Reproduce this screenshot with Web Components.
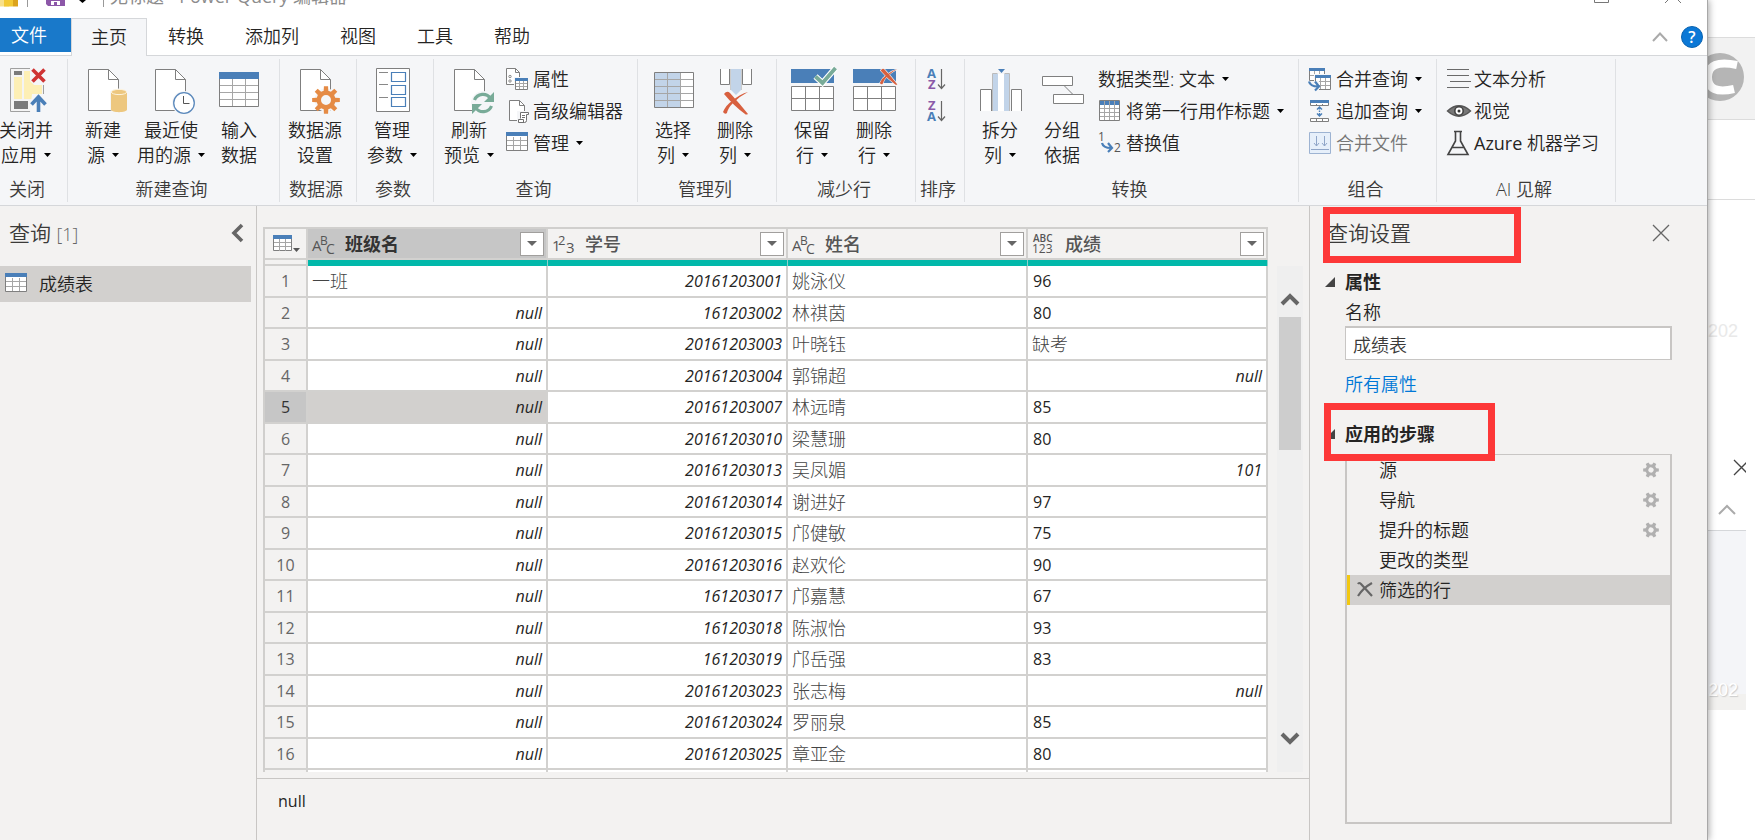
<!DOCTYPE html>
<html lang="zh-CN">
<head>
<meta charset="utf-8">
<title>Power Query 编辑器</title>
<style>
html,body{margin:0;height:100%;overflow:hidden;background:#fff}
body{font:350 18px/24px "Open Sans","Noto Sans CJK SC",sans-serif;color:#252423}
</style>
</head>
<body>
<pq-desktop>
  <pq-window>
    <pq-title-bar></pq-title-bar>
    <pq-tabs></pq-tabs>
    <pq-ribbon></pq-ribbon>
    <pq-workspace>
      <pq-queries></pq-queries>
      <pq-preview></pq-preview>
      <pq-settings></pq-settings>
    </pq-workspace>
  </pq-window>
  <pq-backdrop></pq-backdrop>
</pq-desktop>
<script>
const BASE = `*,:host{box-sizing:border-box}
button{font:inherit;color:inherit;background:none;border:0;padding:0;margin:0;text-align:inherit;cursor:default}
svg{display:block;overflow:visible;flex:none}h2,h3,ul{margin:0;padding:0}`;

function define(name, render) {
  customElements.define(name, class extends HTMLElement {
    connectedCallback() {
      if (this.shadowRoot) return;
      const root = this.attachShadow({ mode: 'open' });
      const t = document.createElement('template');
      t.innerHTML = `<style>${BASE}</style>` + render(this);
      root.append(t.content.cloneNode(true));
    }
  });
}

/* ---------- icons ---------- */
const G = '#7f7f7f', B = '#4a7fb8';
const page = x => `<path d="M${x} 1.5h20l10 10v31h-30z" fill="#fff" stroke="${G}"/><path d="M${x + 20} 1.5v10h10" fill="none" stroke="${G}"/>`;
function gearPath(cx, cy, ro, ri, n, hole) {
  let d = '';
  for (let i = 0; i < n; i++) {
    const a = i * 2 * Math.PI / n - Math.PI / 2, s = Math.PI / n;
    [[ri, -s * .62], [ro, -s * .38], [ro, s * .38], [ri, s * .62]].forEach(([r, o], k) => {
      d += (i || k ? 'L' : 'M') + (cx + r * Math.cos(a + o)).toFixed(2) + ' ' + (cy + r * Math.sin(a + o)).toFixed(2);
    });
  }
  return d + `Z M${cx - hole} ${cy}a${hole} ${hole} 0 1 0 ${2 * hole} 0a${hole} ${hole} 0 1 0 ${-2 * hole} 0Z`;
}
const brushX = (x, y, s) => `<g transform="translate(${x} ${y}) scale(${s})"><path d="M-12-8Q-9-12-6-9Q4 2 12 12Q10 13 9 12Q-2 4-12-8ZM12-10Q4-6-3 1Q-8 6-9 11Q-11 13-13 10Q-10 3-4-1Q4-8 12-10Z" fill="#d8603f" stroke="#f5f6f8" stroke-width="1.6" paint-order="stroke"/></g>`;
const rows2 = `<path d="M1.5 18.5h42v24h-42zM15.5 18.5v24M29.5 18.5v24M1.5 30.5h42" fill="#fff" stroke="${G}"/><path d="M1 1h43v14H1z" fill="${B}"/>`;
const smallTable = `<path d="M.5 3.5h21v15h-21z" fill="#fff" stroke="${G}"/><path d="M7.5 5v13M14.5 5v13M1 8.5h20M1 13.5h20" stroke="#a6a6a6"/><path d="M0 0h22v4H0z" fill="${B}"/>`;
const arrow12 = (x, y) => `<path d="M${x} ${y}c1 4 4 5 9 5M${x + 6} ${y + 0}l4 5l-4 4" fill="none" stroke="${B}" stroke-width="2.2"/>`;
const letter = (x, y, t, c, s = 13, w = 700) => `<text x="${x}" y="${y}" font-family="Open Sans" font-size="${s}" font-weight="${w}" fill="${c}">${t}</text>`;
const sortArrow = '<path d="M15.5 1v19M12 16.5l3.5 4l3.5-4" fill="none" stroke="#666" stroke-width="1.2"/>';

const ICONS = {
  close: [44, `<path d="M6.5.5h33v43h-33z" fill="#f4f4f4" stroke="#a0a0a0"/><path d="M10 3h8v4h-8zM10 33h14v8H10z" fill="#7a7a7a"/><path d="M10 9h8v22h-8zM20 3h18v28H20z" fill="#fdefb5"/><path d="M26-1h18v18H30l-4-4zM28 26h16v18H26z" fill="#f5f6f8"/><path d="M28.500 1.500l12 12M40.500 1.500l-12 12" stroke="#cf3434" stroke-width="3.600"/><path d="M34.500 44V29M27.500 36.500l7-7.500l7 7.500" fill="none" stroke="${B}" stroke-width="3.600"/>`],
  newSource: [44, page(7.5) + `<path d="M29 23q9-5 18 0v19q-9 5-18 0z" fill="#f5f6f8"/><path d="M30 24v17.500c0 3.500 16 3.500 16 0V24z" fill="#edc77f"/><ellipse cx="38" cy="24" rx="7.700" ry="2.600" fill="#edc77f" stroke="#fdf3dd"/>`],
  recent: [44, page(6.5) + `<circle cx="35" cy="35" r="12" fill="#f5f6f8"/><circle cx="35" cy="35" r="10.300" fill="#fff" stroke="#5a88bb" stroke-width="1.300"/><path d="M34.500 28v7.500h6" fill="none" stroke="#555"/>`],
  enter: [44, `<path d="M2.500 8.500h39v30h-39z" fill="#fff" stroke="${G}"/><path d="M15.500 10v28M28.500 10v28M3 17.500h38M3 24.500h38M3 31.500h38" stroke="#a6a6a6"/><path d="M2 4h40v7H2z" fill="${B}"/>`],
  dsSettings: [44, page(7.5) + `<circle cx="33" cy="32" r="11.500" fill="#f5f6f8"/><path fill-rule="evenodd" d="${gearPath(33, 32, 14, 9.5, 8, 5)}" fill="#e58b45"/>`],
  params: [44, `<path d="M6.500.5h33v43h-33z" fill="#fff" stroke="${G}"/><path d="M9 4.500h9M9 16.500h9M9 29.500h9" stroke="#888"/><path d="M21.500 4.500h14v9h-14zM21.500 17.500h14v9h-14zM21.500 29.500h14v9h-14z" fill="#fff" stroke="${B}" stroke-width="1.200"/>`],
  refresh: [44, page(7.5) + `<circle cx="36" cy="35" r="12" fill="#f5f6f8"/><path d="M27.500 32a9 9 0 0 1 16-1.500M44.500 38a9 9 0 0 1-16 1.500" fill="none" stroke="#78ab98" stroke-width="3.200"/><path d="M47 24v10h-10zM25 46V36h10z" fill="#78ab98"/>`],
  selCol: [44, `<path d="M3.500 4.500h39v35h-39z" fill="#fff"/><path d="M4 5h26v34H4z" fill="#c2d4e9"/><path d="M16.500 5v34M29.500 5v34M4 11.500h38M4 18.500h38M4 25.500h38M4 32.500h38" stroke="#a6a6a6"/><path d="M3.500 4.500h39v35h-39z" fill="none" stroke="${G}"/>`],
  delCol: [44, `<path d="M7.500 1v15.500h9V1M29.500 1v15.500h9V1" fill="#fff" stroke="${G}"/><path d="M18 1h10v21l-5 5l-5-5z" fill="#c2d4e9"/><path d="M17.500 1v21M28.500 1v21" stroke="#ccc"/>` + brushX(23, 34, 1)],
  keepRow: [44, rows2 + `<path d="M25.500 8.500l7 6.500l13-15" fill="none" stroke="#fff" stroke-width="6"/><path d="M25.500 8.500l7 6.500l13-15" fill="none" stroke="#78ab98" stroke-width="3.800"/>`],
  delRow: [44, rows2 + brushX(37, 8, .7)],
  split: [44, `<path d="M2.500 43V21.500h11V43M33.500 43V21.500h10V43" fill="#fff" stroke="${G}"/><path d="M14 6h18v37H14z" fill="#fff"/><path d="M15 6h5v37h-5zM26 6h5v37h-5z" fill="#c2d4e9"/><path d="M14.500 43V5.500h5M31.500 43V5.500h-5" fill="none" stroke="#bbb"/><path d="M20 1h7l-3.500 4z" fill="${B}"/>`],
  group: [44, `<path d="M2.500 8.500h30v9h-30zM13.500 26.500h30v9h-30z" fill="#fff" stroke="${G}"/><path d="M24.500 18l8 8" stroke="${G}"/>`],
  props: [22, `<path d="M.5.5h9l4 4v12h-13z" fill="#fff" stroke="${G}"/><path d="M9.500.5v4h4" fill="none" stroke="${G}"/><circle cx="4" cy="8.500" r="1.200" fill="none" stroke="#888"/><circle cx="4" cy="13" r="1.200" fill="none" stroke="#888"/><path d="M8 9h15v13H8z" fill="#f5f6f8"/><path d="M9.500 11.500h12v10h-12z" fill="#fff" stroke="${G}"/><path d="M13.500 13v8M17.500 13v8M10 15.500h11M10 18.500h11" stroke="#a6a6a6"/><path d="M9 10h13v3H9z" fill="${B}"/>`],
  adv: [22, `<path d="M3.500.5h10l5 5v15h-15z" fill="#fff" stroke="${G}"/><path d="M13.500.5v5h5" fill="none" stroke="${G}"/><path d="M11 11h12v12H11z" fill="#f5f6f8"/><path d="M14.500 18.500v-6h8v2h-2v6q0 2-2 2h-6v-3h5v3M16 15.500h3M16 17.500h3" fill="#fff" stroke="#707070"/>`],
  manage: [22, smallTable],
  sortAsc: [22, letter(1, 10, 'A', '#4a7fb8') + letter(2, 21, 'Z', '#8a5aa8') + sortArrow],
  sortDesc: [22, letter(2, 10, 'Z', '#8a5aa8') + letter(1, 21, 'A', '#4a7fb8') + sortArrow],
  header: [22, `<path d="M.5.5h20v20H.5z" fill="#fff"/><path d="M1 1h19v4H1z" fill="${B}"/><path d="M5.500 1v19M10.500 1v19M15.500 1v19M1 8.500h19M1 12.500h19M1 16.500h19" stroke="#a6a6a6"/><path d="M.5.5h20v20H.5z" fill="none" stroke="${G}"/>`],
  replace: [22, letter(-1, 9, '1', '#555', 12, 400) + letter(15, 20, '2', '#555', 12, 400) + arrow12(3, 11)],
  merge: [22, `<path d="M.5 1.500h15v11h-15z" fill="#fff" stroke="${G}"/><path d="M5.500 3v9M10.500 3v9M1 7.500h14" stroke="#a6a6a6"/><path d="M0 0h16v3H0z" fill="${B}"/><path d="M5 6h18v17H5z" fill="#f5f6f8"/><path d="M6.500 8.500h15v13h-15z" fill="#fff" stroke="${G}"/><path d="M11.500 10v11M16.500 10v11M7 13.500h14M7 17.500h14" stroke="#a6a6a6"/><path d="M6 7h16v3H6z" fill="${B}"/><path d="M-1 13h11v10H-1z" fill="#f5f6f8"/>` + arrow12(0, 13.5)],
  append: [22, `<path d="M1.500 1.500h18v4h-18zM1.500 18.500h18v3h-18zM7.500 4v2M13.500 4v2M7.500 19v2M13.500 19v2" fill="#fff" stroke="${G}"/><path d="M1 0h19v3H1z" fill="${B}"/><path d="M10.500 7v2.500M10.500 10.500v1.500M10.500 13v3M8 9.500l2.500-2.500l2.500 2.500M8 13.500l2.500 2.500l2.500-2.500" fill="none" stroke="${B}" stroke-width="1.400"/>`],
  combine: [22, `<path d="M.5.500h21v21H.5z" fill="#e6effa" stroke="#9db3d2"/><path d="M2 17.500h18M7.500 4v10M5 11l2.500 3l2.500-3M15.500 4v10M13 11l2.500 3l2.500-3" fill="none" stroke="#8fa5c8"/>`],
  text: [22, `<path d="M0 1.500h22M0 7.500h22M3 13.500h21M0 19.500h22" stroke="#6a6a6a" stroke-width="1.200"/>`],
  vision: [22, `<path d="M.5 11q11.500-10.500 23 0q-11.500 10.500-23 0z" fill="#777" stroke="#555" stroke-width="1.400"/><circle cx="12" cy="11" r="4.200" fill="#fff" stroke="#444" stroke-width="1.600"/><circle cx="12" cy="11" r="1.500" fill="#333"/>`],
  flask: [22, `<path d="M7 -.5h8M8.500 0v9L1 22.500h20L13.500 9V0M5 15.500h12" fill="none" stroke="#444" stroke-width="1.600"/>`],
  table: [22, smallTable],
  gear: [16, `<path fill-rule="evenodd" d="${gearPath(8, 8, 8, 5.6, 6, 2.6)}" fill="#b0b0b0" transform="rotate(30 8 8)"/>`],
  remove: [16, `<path d="M1 2Q2 0 4 2L15 14M15 1Q6 6 1 14" fill="none" stroke="#666" stroke-width="2.200"/>`]
};
define('pq-icon', el => {
  const [s, body] = ICONS[el.getAttribute('name')];
  return `<style>:host{display:block;flex:none;width:${s}px;height:${s}px}</style><svg width="${s}" height="${s}" aria-hidden="true">${body}</svg>`;
});
define('pq-caret', () => `<style>:host{display:inline-block;vertical-align:middle;margin:0 0 4px 7px}</style><svg width="7" height="4"><path d="M0 0h7l-3.500 4z" fill="#000"/></svg>`);

/* ---------- ribbon parts ---------- */
define('pq-big-button', el => `<style>
:host{display:block;flex:none;width:62px}:host([wide]){width:74px}
button{display:flex;flex-direction:column;align-items:center;gap:6px;width:100%;padding-top:9px}
span{line-height:25px;white-space:nowrap;text-align:center;display:flex;flex-direction:column;align-items:center}</style>
<button type="button"><pq-icon name="${el.getAttribute('icon')}"></pq-icon><span><slot></slot></span></button>`);
define('pq-small-button', el => `<style>
:host{display:block;flex:none;height:32px}:host([disabled]){color:#767676}
button{display:flex;align-items:center;gap:5px;height:32px;padding-left:6px;white-space:nowrap}
:host([textonly]) button{padding-left:5px}</style>
<button type="button"${el.hasAttribute('disabled') ? ' disabled' : ''}${el.title ? ` aria-label="${el.title}"` : ''}>${el.hasAttribute('icon') ? `<pq-icon name="${el.getAttribute('icon')}"></pq-icon>` : ''}<span><slot></slot></span></button>`);
define('pq-group', el => `<style>
:host{display:flex;flex-direction:column;flex:none;width:${el.getAttribute('width')}px;margin-top:3px;height:143px;border-right:1px solid #dfe1e4}
.row{display:flex;flex:1;padding:0 4px;min-height:0}
.label{height:24px;margin-bottom:1px;padding-right:4px;text-align:center;color:#3b3a39;white-space:nowrap}
::slotted(.stack){display:flex;flex-direction:column;padding-top:4px}</style>
<div class="row"><slot></slot></div><div class="label">${el.getAttribute('label')}</div>`);

const big = (icon, a, b, caret, wide) => `<pq-big-button icon="${icon}"${wide ? ' wide' : ''}><div>${a}</div><div>${b}${caret ? '<pq-caret></pq-caret>' : ''}</div></pq-big-button>`;
const small = (icon, t, caret, attr = '') => `<pq-small-button ${icon ? `icon="${icon}"` : 'textonly'} ${attr}>${t}${caret ? '<pq-caret></pq-caret>' : ''}</pq-small-button>`;
define('pq-ribbon', () => `<style>
:host{display:flex;flex:none;height:150px;background:#f5f6f8;border-bottom:1px solid #d5d7da;overflow:hidden}
.first{margin-left:-9px}.latin{font-weight:400}</style>
<pq-group class="first" width="77" label="关闭">${big('close', '关闭并', '应用', 1)}</pq-group>
<pq-group width="212" label="新建查询">${big('newSource', '新建', '源', 1)}${big('recent', '最近使', '用的源', 1, 1)}${big('enter', '输入', '数据')}</pq-group>
<pq-group width="77" label="数据源">${big('dsSettings', '数据源', '设置')}</pq-group>
<pq-group width="77" label="参数">${big('params', '管理', '参数', 1)}</pq-group>
<pq-group width="204" label="查询">${big('refresh', '刷新', '预览', 1)}<div class="stack">${small('props', '属性')}${small('adv', '高级编辑器')}${small('manage', '管理', 1)}</div></pq-group>
<pq-group width="139" label="管理列">${big('selCol', '选择', '列', 1)}${big('delCol', '删除', '列', 1)}</pq-group>
<pq-group width="139" label="减少行">${big('keepRow', '保留', '行', 1)}${big('delRow', '删除', '行', 1)}</pq-group>
<pq-group width="49" label="排序"><div class="stack">${small('sortAsc', '', 0, 'title="升序排序"')}${small('sortDesc', '', 0, 'title="降序排序"')}</div></pq-group>
<pq-group width="334" label="转换">${big('split', '拆分', '列', 1)}${big('group', '分组', '依据')}<div class="stack">${small('', '数据类型: 文本', 1)}${small('header', '将第一行用作标题', 1)}${small('replace', '替换值')}</div></pq-group>
<pq-group width="138" label="组合"><div class="stack">${small('merge', '合并查询', 1)}${small('append', '追加查询', 1)}${small('combine', '合并文件', 0, 'disabled')}</div></pq-group>
<pq-group width="179" label="AI 见解"><div class="stack">${small('text', '文本分析')}${small('vision', '视觉')}${small('flask', '<span class="latin">Azure </span>机器学习')}</div></pq-group>`);

/* ---------- window chrome ---------- */
define('pq-desktop', () => `<style>:host{display:grid;grid-template-columns:minmax(0,1fr) 47px;height:100vh;overflow:hidden}</style><slot></slot>`);
define('pq-window', () => `<style>:host{display:flex;flex-direction:column;min-width:0;height:100vh;background:#fff;position:relative;z-index:1;border-right:1px solid #a8a8a8;box-shadow:1px 0 7px rgba(0,0,0,.35)}</style><slot></slot>`);
define('pq-title-bar', () => `<style>
:host{display:flex;align-items:flex-start;flex:none;height:18px;overflow:hidden;color:#8c8c8c}
.text{margin:-16px auto 0 6px;white-space:nowrap;font-weight:400}</style>
<svg width="104" height="18"><path d="M0 0h9v6.500H0z" fill="#f8e08a"/><path d="M4 0h9v6.500H4z" fill="#f3c934"/><path d="M13 0h5v6.500h-5z" fill="#dca31c"/><path d="M27.500 0v7M103.500 0v7" stroke="#999"/><path d="M46 0h19v6H48l-2-2z" fill="#8c57a8"/><path d="M51 5V1h9v4h-3V2h-3v3z" fill="#fff"/><path d="M79 0h7l-3.500 3z" fill="#000"/></svg>
<span class="text">无标题 - Power Query 编辑器</span>
<svg width="114" height="18"><path d="M1.500 0v2.500h14V0M72 3l8-8l8 8" fill="none" stroke="#777"/></svg>`);
define('pq-tabs', () => `<style>
:host{display:flex;flex:none;height:38px;border-bottom:1px solid #d5d7da}
nav{display:flex;flex:1}
button{padding:0 20px 1px 21px;height:37px}
.file{width:71px;height:34px;padding:0 0 0 11px;background:#1979ca;color:#fff}
.on{height:38px;background:#f5f6f8;border:1px solid #d5d7da;border-bottom:0;padding:0 19px 1px}
.end{display:flex;align-items:center;gap:13px;padding-right:4px}
.help{width:22px;height:22px;border-radius:50%;background:#0b78d6;border:1px solid #0a63b0;color:#fff;text-align:center;font-size:16px;line-height:20px;padding:0;font-weight:600}
.fold{padding:0;height:22px;display:grid;place-items:center;width:16px}</style>
<nav><button class="file" type="button">文件</button><button class="on" type="button">主页</button><button type="button">转换</button><button type="button">添加列</button><button type="button">视图</button><button type="button">工具</button><button type="button">帮助</button></nav>
<div class="end"><button class="fold" type="button" aria-label="折叠功能区"><svg width="16" height="10"><path d="M1 9l7-7.500l7 7.500" fill="none" stroke="#aaa" stroke-width="2"/></svg></button><button class="help" type="button">?</button></div>`);
define('pq-workspace', () => `<style>:host{display:flex;flex:1;min-height:0;background:#f3f2f1}</style><slot></slot>`);

/* ---------- queries ---------- */
define('pq-queries', () => `<style>
:host{display:block;flex:none;width:257px;border-right:1px solid #c8c6c4}
header{display:flex;justify-content:space-between;align-items:center;height:30px;margin:12px 13px 18px 9px}
h2{font-size:21px;font-weight:inherit;line-height:30px;color:#3b3a39}h2 span{color:#666;font-size:18px}
.item{display:flex;align-items:center;gap:12px;width:251px;height:36px;padding-left:5px;background:#d2d0ce}</style>
<header><h2>查询 <span>[1]</span></h2><button type="button" aria-label="折叠"><svg width="12" height="18"><path d="M11 1L3 9l8 8" fill="none" stroke="#666" stroke-width="3.600"/></svg></button></header>
<button class="item" type="button"><pq-icon name="table"></pq-icon>成绩表</button>`);

/* ---------- data preview ---------- */
const DATA = [
  ['一班', '20161203001', '姚泳仪', '96'], [null, '161203002', '林祺茵', '80'], [null, '20161203003', '叶晓钰', '缺考'],
  [null, '20161203004', '郭锦超', null], [null, '20161203007', '林远晴', '85'], [null, '20161203010', '梁慧珊', '80'],
  [null, '20161203013', '吴凤媚', 101], [null, '20161203014', '谢进好', '97'], [null, '20161203015', '邝健敏', '75'],
  [null, '20161203016', '赵欢伦', '90'], [null, '161203017', '邝嘉慧', '67'], [null, '161203018', '陈淑怡', '93'],
  [null, '161203019', '邝岳强', '83'], [null, '20161203023', '张志梅', null], [null, '20161203024', '罗丽泉', '85'],
  [null, '20161203025', '章亚金', '80']
];
const T = (x, y, t, s) => letter(x, y, t, '#555', s, 400);
const TYPES = {
  text: T(0, 18, 'A', 15) + T(8, 12, 'B', 12) + T(14, 21, 'C', 14),
  int: T(0, 18, '1', 15) + T(6, 12, '2', 13) + T(14, 20, '3', 15),
  any: letter(1, 9, 'ABC', '#555', 10, 600) + T(0, 20, '123', 12)
};
const HEADS = [['班级名', 'text'], ['学号', 'int'], ['姓名', 'text'], ['成绩', 'any']];
define('pq-preview', () => `<style>
:host{display:flex;flex-direction:column;flex:1;min-width:0}
.view{display:flex;flex:1;min-height:0;margin:21px 5px 6px 6px;gap:9px;overflow:hidden}
.clip{flex:none;overflow:hidden}
table{border-collapse:separate;border-spacing:0;table-layout:fixed;width:1005px;border-left:2px solid #d0cfcd;border-top:2px solid #d0cfcd}
th,td{padding:0 4px;border-right:2px solid #d2d1cf;border-bottom:2px solid #d2d1cf;font-weight:inherit;overflow:hidden;white-space:nowrap;text-align:left}
thead th{height:31px}
.h{display:flex;align-items:center;height:29px;gap:11px}
.h b{flex:1;font-weight:500;color:#555}.sel .h b{font-weight:600;color:#333}
.sel{background:#c6c6c6}
thead th{padding-right:2px}
.h button{width:24px;height:24px;border:1px solid #a19f9d;background:#fff;display:grid;place-items:center}
.bar td{height:6px;padding:0;line-height:0;border-bottom:0;background:#01b8aa;border-right:1px solid #8fd0ca}
.bar td:first-child{background:#f3f2f1;border-bottom:2px solid #d2d1cf;border-right:2px solid #d2d1cf}
tbody td{background:#fff;height:31px}
tbody td,tbody th{font-size:16px}
tbody tr:nth-child(even) td{height:32px}
tbody th{text-align:center;color:#666;padding:0;font-weight:400}
tbody .cjk{font-size:18px;color:#444;font-weight:300}
.num{text-align:right;font-style:italic;font-weight:400;padding-right:4px}
.plain{font-weight:400;padding-left:5px}
.cur th{background:#c6c6c6;color:#333}.cur td:nth-child(2){background:#d2d0ce}
.corner{display:flex;align-items:flex-end;padding-left:4px}
.scroll{display:flex;flex-direction:column;align-items:center;width:26px;flex:none;margin-top:39px;background:#efefef}
.scroll button{height:12px;margin:27px 0 12px}
.thumb{width:22px;height:133px;background:#cdcdcd}
.scroll .down{margin:auto 0 27px}
.detail{flex:none;height:62px;border-top:1px solid #c8c6c4;padding:10px 21px;font-size:16px;font-weight:400}</style>
<div class="view"><div class="clip"><table>
<colgroup><col style="width:43px"><col span="4" style="width:240px"></colgroup>
<thead><tr><th><div class="corner"><svg width="19" height="17"><path d="M.5 2.500h18v13H.5z" fill="#fff" stroke="${G}"/><path d="M6.500 4v12M12.500 4v12M1 7.500h17M1 11.500h17" stroke="#a6a6a6"/><path d="M0 0h19v4H0z" fill="${B}"/></svg><svg width="7" height="4"><path d="M1 0h7l-3.500 4z" fill="#555"/></svg></div></th>
${HEADS.map(([n, t], i) => `<th${i ? '' : ' class="sel"'}><div class="h"><svg width="22" height="22">${TYPES[t]}</svg><b>${n}</b><button type="button" aria-label="筛选 ${n}"><svg width="10" height="5"><path d="M0 0h10L5 5z" fill="#666"/></svg></button></div></th>`).join('')}</tr></thead>
<tbody><tr class="bar"><td></td><td></td><td></td><td></td><td></td></tr>
${DATA.map((r, i) => `<tr${i === 4 ? ' class="cur"' : ''}><th>${i + 1}</th>${r.map((v, c) => v === null ? '<td class="num">null</td>' : c === 1 || typeof v === 'number' ? `<td class="num">${v}</td>` : /\d/.test(v) ? `<td class="plain">${v}</td>` : `<td class="cjk">${v}</td>`).join('')}</tr>`).join('')}
<tr><th></th><td></td><td></td><td></td><td></td></tr></tbody></table></div>
<div class="scroll"><button type="button" aria-label="向上滚动"><svg width="18" height="12"><path d="M1 11l8-8l8 8" fill="none" stroke="#666" stroke-width="4"/></svg></button><div class="thumb"></div><button class="down" type="button" aria-label="向下滚动"><svg width="18" height="12"><path d="M1 1l8 8l8-8" fill="none" stroke="#666" stroke-width="4"/></svg></button></div></div>
<div class="detail">null</div>`);

/* ---------- settings ---------- */
define('pq-mark', () => `<style>:host{display:block;position:absolute;border:7px solid #fd3838;pointer-events:none}</style>`);
const STEPS = [['源', 1], ['导航', 1], ['提升的标题', 1], ['更改的类型', 0], ['筛选的行', 0]];
define('pq-settings', () => `<style>
:host{display:flex;flex-direction:column;flex:none;width:398px;border-left:1px solid #c8c6c4;padding:12px 35px 16px 35px;position:relative}
header{display:flex;justify-content:space-between;align-items:center;height:30px;margin:0 2px 22px -18px}
h2{font-size:21px;font-weight:inherit;line-height:30px;color:#3b3a39}
h3{display:flex;align-items:center;gap:10px;margin-left:-20px;font-size:18px;line-height:24px;font-weight:700;color:#252423}
label{margin:6px 0 2px;line-height:24px}
input{font:inherit;color:#3b3a39;height:34px;border:1px solid #c8c6c4;border-top-width:2px;border-right-width:2px;padding:0 7px;background:#fff;width:100%;border-radius:0}
a{color:#0078d7;text-decoration:none;margin:12px 0 26px;align-self:flex-start}
ul{list-style:none;flex:1;min-height:0;margin-top:8px;border:2px solid #c8c6c4;border-top-width:1px}
li{display:flex;align-items:center;height:30px;padding:0 11px 0 32px}
li span{flex:1}
li.on{background:#d2d0ce;border-left:3px solid #f2c811;padding-left:7px;gap:6px}
.m1{left:13px;top:1px;width:198px;height:56px}.m2{left:14px;top:197px;width:171px;height:58px}</style>
<header><h2>查询设置</h2><button type="button" aria-label="关闭"><svg width="18" height="18"><path d="M1 1l16 16M17 1L1 17" stroke="#666" stroke-width="1.300"/></svg></button></header>
<h3><svg width="10" height="10"><path d="M10 0v10H0z" fill="#444"/></svg>属性</h3>
<label for="n">名称</label><input id="n" value="成绩表"><a href="#">所有属性</a>
<h3><svg width="10" height="10"><path d="M10 0v10H0z" fill="#444"/></svg>应用的步骤</h3>
<ul>${STEPS.map(([s, g], i) => `<li${i === 4 ? ' class="on"' : ''}>${i === 4 ? '<button type="button" aria-label="删除步骤"><pq-icon name="remove"></pq-icon></button>' : ''}<span>${s}</span>${g ? '<button type="button" aria-label="设置"><pq-icon name="gear"></pq-icon></button>' : ''}</li>`).join('')}</ul>
<pq-mark class="m1"></pq-mark><pq-mark class="m2"></pq-mark>`);

/* ---------- window behind ---------- */
define('pq-backdrop', () => `<style>
:host{display:flex;flex-direction:column;overflow:hidden;background:#fff;height:100vh;font-family:"Liberation Sans",sans-serif}
.bar{margin-top:37px;height:83px;background:#f2f2f2;border:solid #dcdcdc;border-width:1px 0;flex:none}
.bar svg{margin:15px 0 0 -12px}
.gap{height:80px;border-bottom:1px solid #dcdcdc;flex:none}
.mark{color:#e9e9e9;line-height:24px;font-weight:400}
.a{margin-top:119px}
.x{margin:116px 0 0 25px}.up{margin:28px 0 0 10px}
.panel{width:38px;height:180px;margin-top:15px;background:#f4f5f8;border-top:1px solid #d5d7da;border-bottom:16px solid #f2f1ef;display:flex;align-items:flex-end;flex:none}
.panel .mark{margin-bottom:-8px;color:#fff;text-shadow:1px 1px 1px #ccc}
.clip{width:38px;overflow:hidden}</style>
<div class="bar"><svg width="48" height="48"><circle cx="24" cy="24" r="24" fill="#b5b5b5"/><path d="M41 12Q12 6 12 24Q12 42 38 36" fill="none" stroke="#fff" stroke-width="8"/></svg></div>
<div class="gap"></div>
<div class="mark a">202</div>
<div class="clip"><svg class="x" width="17" height="17"><path d="M1 1l15 15M16 1L1 16" stroke="#444" stroke-width="1.300"/></svg></div>
<svg class="up" width="18" height="11"><path d="M1 10l8-8l8 8" fill="none" stroke="#aaa" stroke-width="2"/></svg>
<div class="panel"><div class="mark">202</div></div>`);
</script>
</body>
</html>
